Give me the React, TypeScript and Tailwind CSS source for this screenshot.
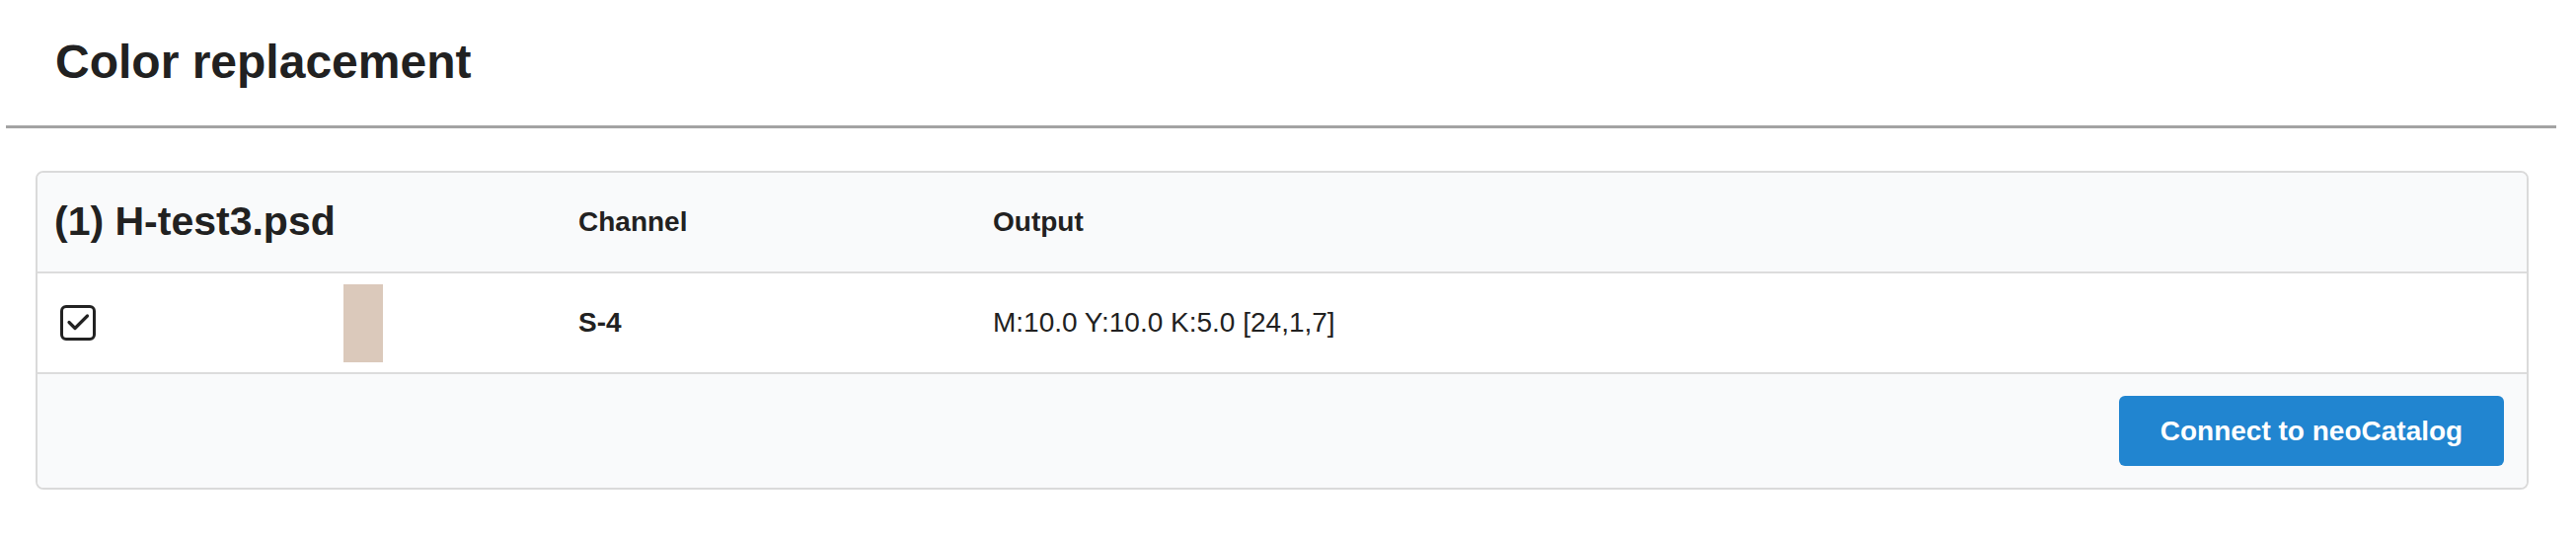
interface ColorRow {
  id: number;
  checked: boolean;
  swatch: string;
  channel: string;
  output: string;
}

const rows: ColorRow[] = [
  {
    id: 1,
    checked: true,
    swatch: "#dbc9bb",
    channel: "S-4",
    output: "M:10.0 Y:10.0 K:5.0 [24,1,7]",
  },
];

function CheckBox({ checked }: { checked: boolean }) {
  return (
    <svg viewBox="0 0 36 36" className="h-[36px] w-[36px] shrink-0" fill="none" stroke="#222222">
      <rect x="1.5" y="1.5" width="33" height="33" rx="4.5" strokeWidth="3" />
      {checked && (
        <path d="M9 17.5l6 6L27.5 11" strokeWidth="3.2" strokeLinecap="round" strokeLinejoin="round" />
      )}
    </svg>
  );
}

export default function App() {
  return (
    <div className="min-h-screen bg-white font-['Liberation_Sans',Arial,sans-serif] text-[#212121]">
      <div className="ml-[6px] mr-[20px] border-b-[3px] border-[#a3a3a3] pb-[40px] pl-[50px] pt-[39px]">
        <h1 className="text-[48px] font-bold leading-none">Color replacement</h1>
      </div>

      <div className="ml-[36px] mr-[48px] mt-[43px] overflow-hidden rounded-[8px] border-2 border-[#dadada]">
        <div className="grid h-[102px] grid-cols-[548px_420px_1fr] items-center border-b-2 border-[#dcdcdc] bg-[#f9fafb]">
          <div className="pl-[17px] text-[41px] font-bold">(1) H-test3.psd</div>
          <div className="text-[28px] font-bold">Channel</div>
          <div className="text-[28px] font-bold">Output</div>
        </div>

        {rows.map((row) => (
          <div
            key={row.id}
            className="grid h-[102px] grid-cols-[548px_420px_1fr] items-center border-b-2 border-[#dcdcdc] bg-white"
          >
            <div className="flex items-center gap-[251px] pl-[23px]">
              <CheckBox checked={row.checked} />
              <span className="block h-[79px] w-[40px]" style={{ backgroundColor: row.swatch }}></span>
            </div>
            <div className="text-[28px] font-bold">{row.channel}</div>
            <div className="text-[28px]">{row.output}</div>
          </div>
        ))}

        <div className="flex h-[115px] items-center justify-end bg-[#f9fafb] pr-[23px]">
          <button className="h-[71px] w-[390px] rounded-[6px] bg-[#2185d0] text-[28px] font-bold text-white">
            Connect to neoCatalog
          </button>
        </div>
      </div>
    </div>
  );
}
